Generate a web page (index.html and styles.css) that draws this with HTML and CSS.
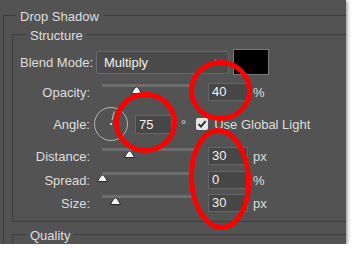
FILE: index.html
```html
<!DOCTYPE html>
<html>
<head>
<meta charset="utf-8">
<link rel="stylesheet" href="styles.css">
</head>
<body>
<div class="panel">
  <fieldset class="group outer">
    <legend>Drop Shadow</legend>
    <fieldset class="group structure">
      <legend>Structure</legend>
      <div class="row blend-row">
        <span class="blend-label">Blend Mode:</span>
        <div class="select">
          <span>Multiply</span>
          <svg class="chev" width="9" height="6" viewBox="0 0 9 6"><polyline points="1,1 4.5,4.5 8,1" fill="none" stroke="#c8c8c8" stroke-width="1.2"/></svg>
        </div>
        <div class="swatch"></div>
      </div>
      <div class="row slider-row first">
        <span class="label">Opacity:</span>
        <div class="slider"><div class="track"></div><svg class="thumb" style="left:38%" width="11" height="9" viewBox="0 0 11 9"><path d="M5.5 0.8 C6.6 0.8 10.4 6.4 10.4 7.6 L0.6 7.6 C0.6 6.4 4.4 0.8 5.5 0.8 Z" fill="#f4f4f4" stroke="#222" stroke-width="1" stroke-linejoin="round"/></svg></div>
        <div class="field">40</div>
        <span class="unit">%</span>
      </div>
      <div class="row angle-row">
        <span class="label">Angle:</span>
        <svg class="dial" width="34" height="34" viewBox="0 0 34 34">
          <circle cx="17" cy="17" r="16.5" fill="none" stroke="#b4b4b4" stroke-width="1"/>
          <line x1="18" y1="13.1" x2="20.4" y2="4.4" stroke="#c8c8c8" stroke-width="1"/>
          <circle cx="17" cy="17" r="1.2" fill="#c8c8c8"/>
        </svg>
        <div class="field angle-field">75</div>
        <span class="deg">°</span>
        <span class="checkbox"><svg width="12" height="12" viewBox="0 0 12 12"><polyline points="2.6,6.2 5,8.6 9.6,3.2" fill="none" stroke="#2b2b2b" stroke-width="1.8"/></svg></span>
        <span class="check-label">Use Global Light</span>
      </div>
      <div class="row slider-row">
        <span class="label">Distance:</span>
        <div class="slider"><div class="track"></div><svg class="thumb" style="left:30%" width="11" height="9" viewBox="0 0 11 9"><path d="M5.5 0.8 C6.6 0.8 10.4 6.4 10.4 7.6 L0.6 7.6 C0.6 6.4 4.4 0.8 5.5 0.8 Z" fill="#f4f4f4" stroke="#222" stroke-width="1" stroke-linejoin="round"/></svg></div>
        <div class="field">30</div>
        <span class="unit">px</span>
      </div>
      <div class="row slider-row">
        <span class="label">Spread:</span>
        <div class="slider"><div class="track"></div><svg class="thumb" style="left:0%" width="11" height="9" viewBox="0 0 11 9"><path d="M5.5 0.8 C6.6 0.8 10.4 6.4 10.4 7.6 L0.6 7.6 C0.6 6.4 4.4 0.8 5.5 0.8 Z" fill="#f4f4f4" stroke="#222" stroke-width="1" stroke-linejoin="round"/></svg></div>
        <div class="field">0</div>
        <span class="unit">%</span>
      </div>
      <div class="row slider-row last">
        <span class="label">Size:</span>
        <div class="slider"><div class="track"></div><svg class="thumb" style="left:15%" width="11" height="9" viewBox="0 0 11 9"><path d="M5.5 0.8 C6.6 0.8 10.4 6.4 10.4 7.6 L0.6 7.6 C0.6 6.4 4.4 0.8 5.5 0.8 Z" fill="#f4f4f4" stroke="#222" stroke-width="1" stroke-linejoin="round"/></svg></div>
        <div class="field">30</div>
        <span class="unit">px</span>
      </div>
    </fieldset>
    <fieldset class="group quality">
      <legend>Quality</legend>
    </fieldset>
  </fieldset>
  <svg class="marks" width="346" height="244" viewBox="0 0 346 244">
    <ellipse cx="220.5" cy="90.5" rx="29" ry="28" fill="none" stroke="#ff0000" stroke-width="5"/>
    <ellipse cx="145.5" cy="122.5" rx="29" ry="28" fill="none" stroke="#ff0000" stroke-width="5"/>
    <ellipse cx="220" cy="179" rx="28.5" ry="48.5" transform="rotate(-3 220 179)" fill="none" stroke="#ff0000" stroke-width="5"/>
  </svg>
</div>
</body>
</html>
```

FILE: styles.css
```css
* { box-sizing: border-box; }

body {
  margin: 0;
  background: #ffffff;
  font-family: "Liberation Sans", Arial, sans-serif;
  font-size: 13px;
  color: #dedede;
}

.panel {
  position: relative;
  width: 346px;
  height: 244px;
  background: #535353;
  overflow: hidden;
  box-shadow: 1px 1px 4px rgba(0, 0, 0, 0.5);
}

.group {
  margin: 0;
  padding: 0;
  min-width: 0;
  border: 1px solid #3d3d3d;
  border-right: none;
  border-bottom: none;
}

.group > legend {
  padding: 2px 4px 0;
  line-height: 13px;
}

.outer {
  margin: 8px 0 0 3px;
}

.outer > legend {
  margin-left: 12px;
}

.structure {
  margin: 4px 0 0 8px;
  padding: 7px 0 9px;
  border-bottom: 1px solid #3d3d3d;
}

.structure > legend,
.quality > legend {
  margin-left: 13px;
}

.quality {
  margin: 5px 0 0 8px;
  min-height: 40px;
}

.row {
  display: flex;
  align-items: center;
}

.blend-row {
  height: 26px;
  padding-left: 7px;
}

.blend-label {
  width: 76px;
}

.select {
  width: 133px;
  height: 23px;
  display: flex;
  align-items: center;
  justify-content: space-between;
  padding: 0 5px 0 7px;
  background: #4b4b4b;
  border: 1px solid #696969;
  border-radius: 3px;
  color: #f0f0f0;
}

.chev {
  display: block;
}

.swatch {
  width: 36px;
  height: 26px;
  margin-left: 4px;
  background: #000;
  border: 1px solid #7a7a7a;
}

.slider-row {
  height: 18px;
  margin-top: 6px;
}

.slider-row.first {
  margin-top: 8px;
}

.slider-row.last {
  margin-top: 5px;
}

.label {
  width: 77px;
  text-align: right;
}

.slider {
  position: relative;
  width: 92px;
  height: 18px;
  margin-left: 12px;
}

.track {
  height: 3px;
  margin-top: 1px;
  background: #6e6e6e;
}

.thumb {
  position: absolute;
  top: 3px;
  margin-left: -5.5px;
  display: block;
}

.field {
  width: 40px;
  height: 18px;
  margin-left: 14px;
  padding-left: 3px;
  line-height: 16px;
  background: #464646;
  border: 1px solid #666;
  color: #f2f2f2;
}

.unit {
  margin-left: 5px;
}

.angle-row {
  height: 34px;
  margin-top: 6px;
}

.dial {
  display: block;
  margin-left: 4px;
}

.angle-field {
  width: 37px;
  height: 19px;
  margin-left: 7px;
  line-height: 17px;
}

.deg {
  margin-left: 9px;
}

.checkbox {
  width: 12px;
  height: 12px;
  margin-left: 10px;
  background: #e4e4e4;
  border-radius: 2px;
  display: flex;
}

.check-label {
  margin-left: 6px;
}

.marks {
  position: absolute;
  top: 0;
  left: 0;
  pointer-events: none;
}
```
